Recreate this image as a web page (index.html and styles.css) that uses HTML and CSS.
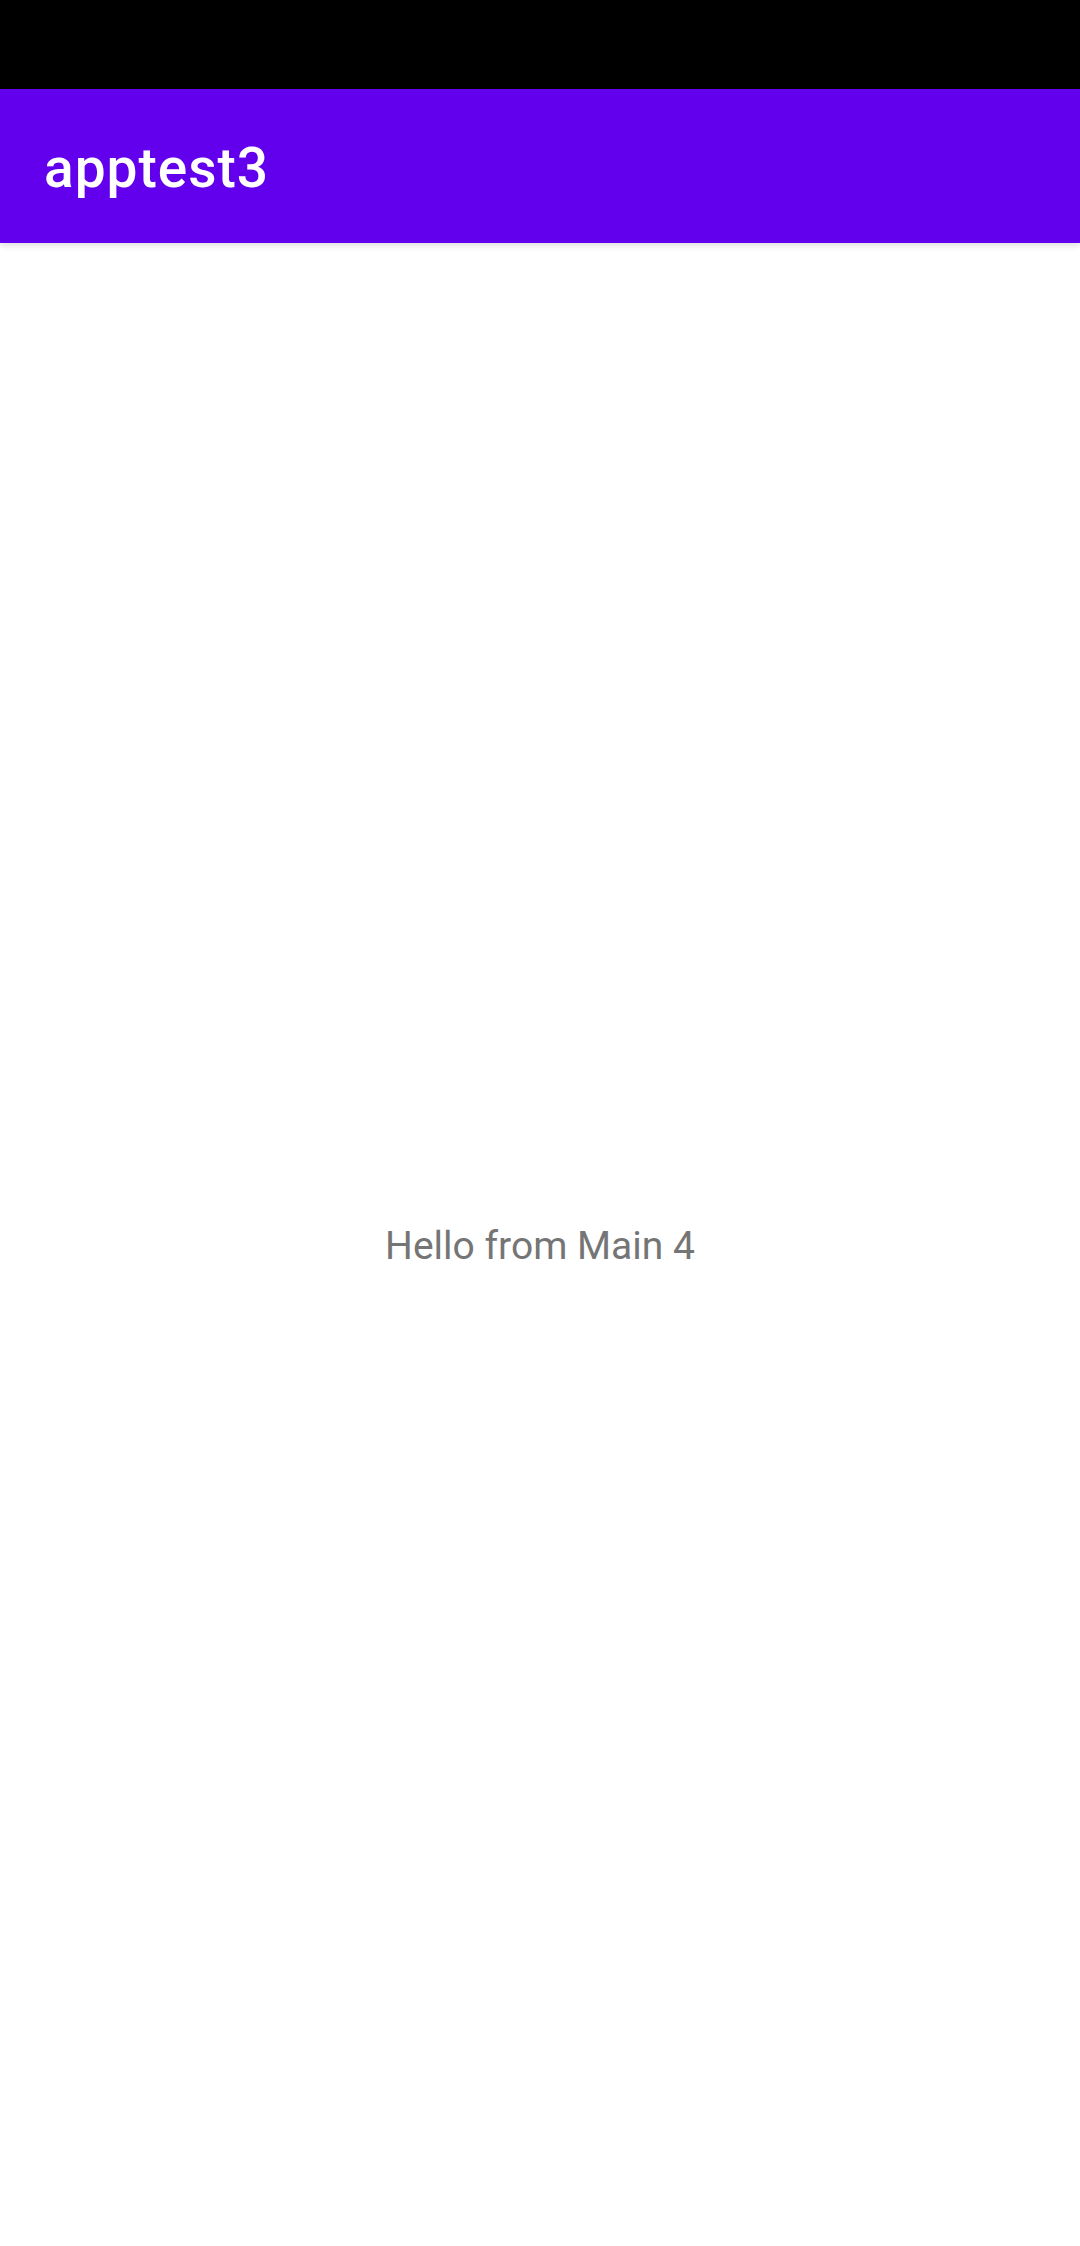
FILE: index.html
```html
<!DOCTYPE html>
<html>
<head>
<meta charset="utf-8">
<link rel="stylesheet" href="styles.css">
</head>
<body>
<div class="screen">
  <div class="status-bar"></div>
  <header class="app-bar"><h1 class="title">apptest3</h1></header>
  <main class="content"><p class="hello">Hello from Main 4</p></main>
</div>
</body>
</html>
```
FILE: styles.css
```css
html, body { margin: 0; padding: 0; background: #fff; }
.screen { width: 1080px; height: 2246px; display: flex; flex-direction: column; font-family: Roboto, "Noto Sans", sans-serif; }
.status-bar { height: 89px; background: #000; flex: none; }
.app-bar { height: 154px; background: #6200ee; flex: none; display: flex; align-items: center; padding-left: 44px; box-shadow: 0 3px 6px rgba(0,0,0,0.12); position: relative; z-index: 1; }
.title { margin: 0; color: #fff; font-size: 55px; font-weight: 500; letter-spacing: 1px; padding-top: 4px; }
.content { flex: 1; display: flex; align-items: center; justify-content: center; }
.hello { margin: 0; color: #757575; font-size: 39px; font-weight: 400; padding-top: 2px; }
```
